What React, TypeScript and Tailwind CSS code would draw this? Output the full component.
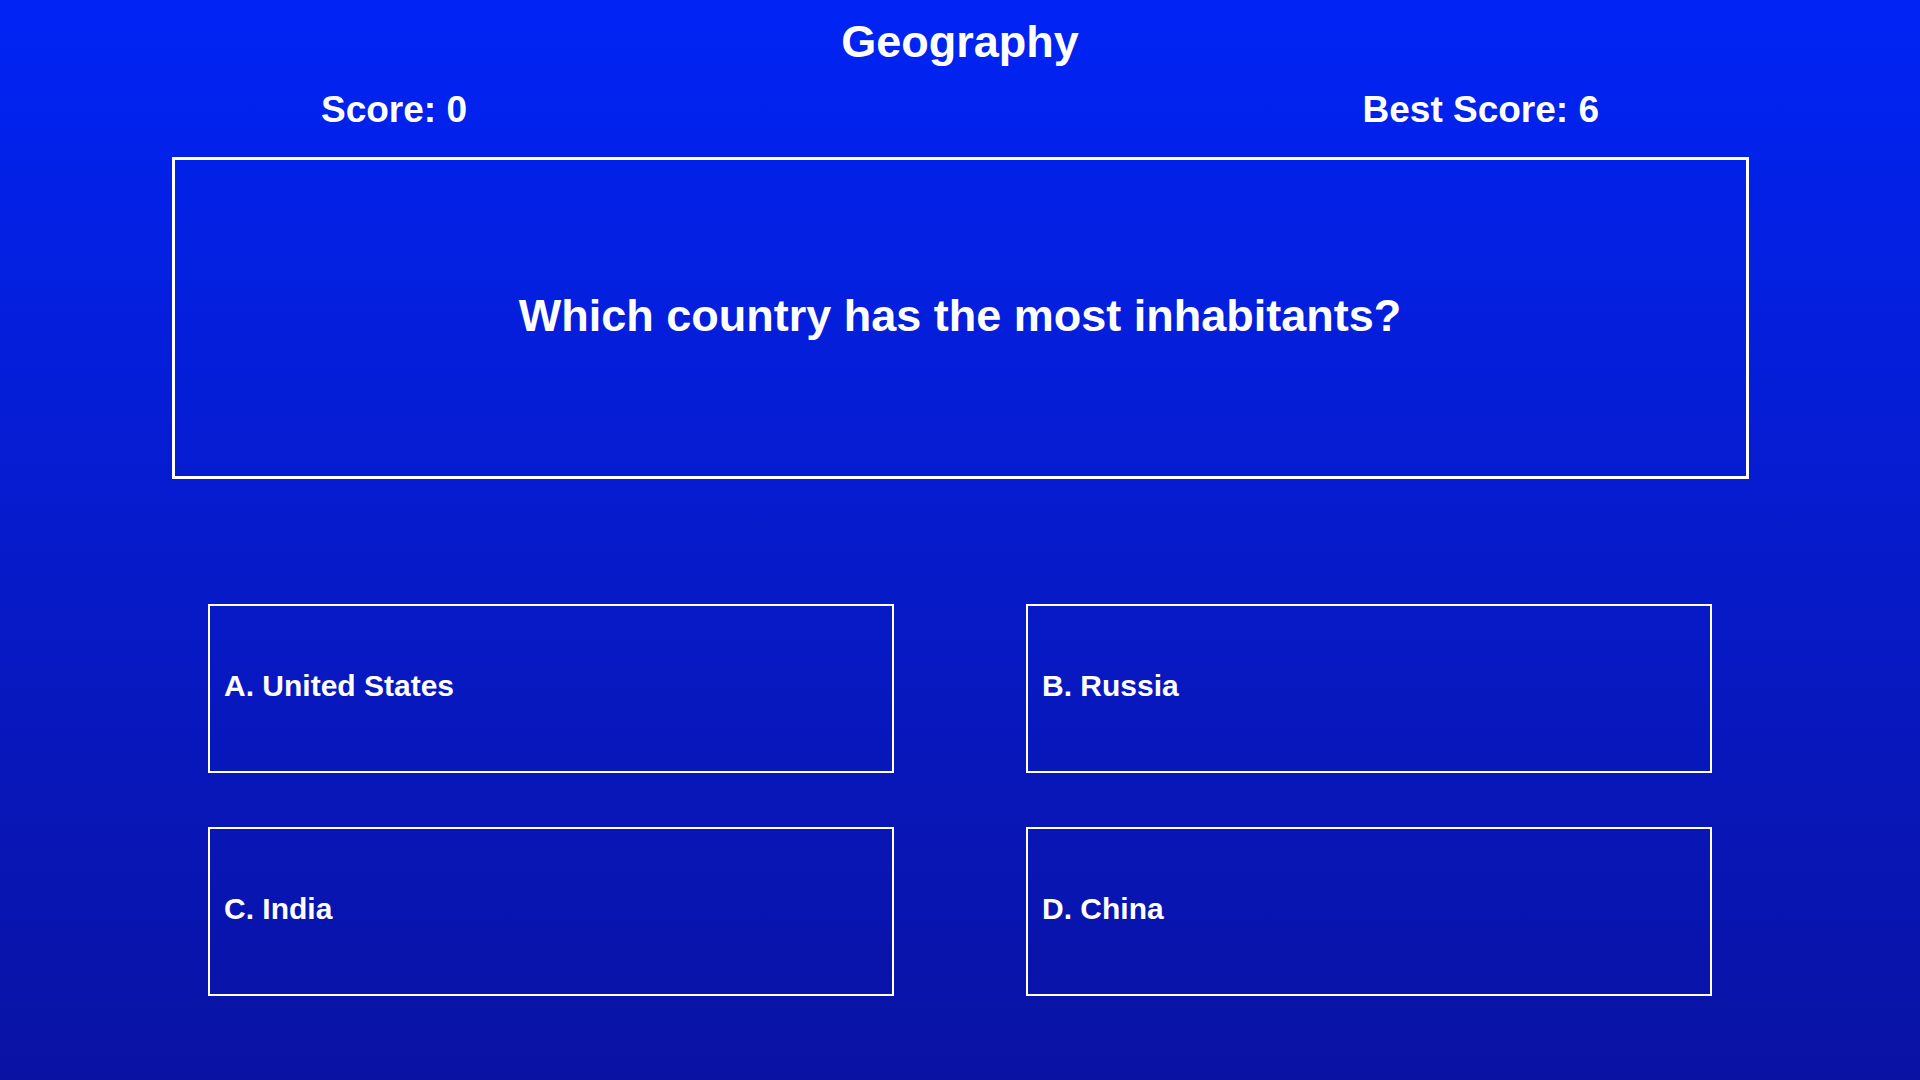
const answers = [
  { key: "A", label: "United States" },
  { key: "B", label: "Russia" },
  { key: "C", label: "India" },
  { key: "D", label: "China" },
];

const App = () => {
  return (
    <div className="min-h-screen w-full bg-gradient-to-b from-[#0024f5] to-[#0912a3] font-['Liberation_Sans',Arial,sans-serif] font-bold text-white">
      <h1 className="pt-[20px] text-center text-[45px] leading-[44px]">Geography</h1>

      <div className="mt-[28px] flex justify-between px-[321px] text-[37px] leading-[36px]">
        <span>Score: 0</span>
        <span>Best Score: 6</span>
      </div>

      <section className="mx-auto mt-[29px] flex h-[322px] w-[1577px] items-center justify-center border-[3px] border-white pb-[5px]">
        <p className="text-[45px] leading-[44px]">Which country has the most inhabitants?</p>
      </section>

      <div className="mx-auto mt-[125px] grid w-[1504px] grid-cols-2 gap-x-[132px] gap-y-[54px] pb-[84px]">
        {answers.map((answer) => (
          <button
            key={answer.key}
            type="button"
            className="flex h-[169px] items-center border-2 border-white px-[14px] pb-[5px] text-left text-[30px] leading-[30px]"
          >
            {answer.key}. {answer.label}
          </button>
        ))}
      </div>
    </div>
  );
};

export default App;
